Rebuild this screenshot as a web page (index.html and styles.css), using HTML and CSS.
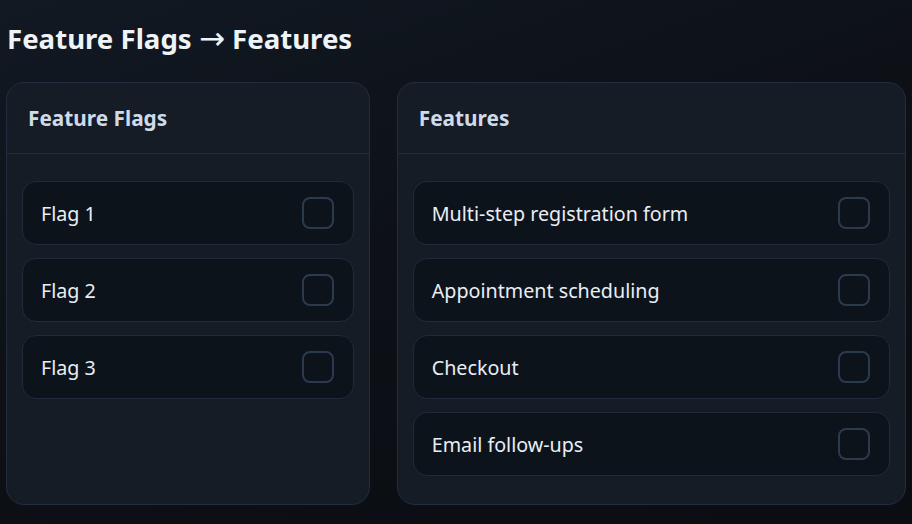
FILE: index.html
```html
<!DOCTYPE html>
<html lang="en">
<head>
<meta charset="UTF-8" />
<meta name="viewport" content="width=device-width, initial-scale=1.0" />
<title>Feature Flags → Features</title>
<link rel="stylesheet" href="styles.css">
</head>
<body>

<h1>Feature Flags <span class="arrow">→</span> Features</h1>

<div class="boards">
  <div class="card">
    <div class="card-head">Feature Flags</div>
    <div class="card-body">
      <label class="item"><span>Flag 1</span><span class="box"></span></label>
      <label class="item"><span>Flag 2</span><span class="box"></span></label>
      <label class="item"><span>Flag 3</span><span class="box"></span></label>
    </div>
  </div>

  <div class="card">
    <div class="card-head">Features</div>
    <div class="card-body">
      <label class="item"><span>Multi-step registration form</span><span class="box"></span></label>
      <label class="item"><span>Appointment scheduling</span><span class="box"></span></label>
      <label class="item"><span>Checkout</span><span class="box"></span></label>
      <label class="item"><span>Email follow-ups</span><span class="box"></span></label>
    </div>
  </div>
</div>

</body>
</html>
```

FILE: styles.css
```css
html, body {
  height: 100%;
}

body {
  margin: 0;
  padding: 0 6px;
  font-family: "Noto Sans", "Open Sans", sans-serif;
  color: #e6edf3;
  background: linear-gradient(160deg, #121923 0%, #0d1117 45%, #0a0d12 100%);
}

h1 {
  margin: 0;
  padding: 18px 1px 0;
  height: 40px;
  font-size: 27.6px;
  font-weight: 700;
  line-height: 40px;
  color: #eef3f8;
}

.arrow {
  font-family: "DejaVu Sans", sans-serif;
  font-weight: 400;
  font-size: 31px;
  line-height: 0;
}

.boards {
  display: grid;
  grid-template-columns: 5fr 7fr;
  gap: 27px;
  margin-top: 24px;
}

.card {
  background: #161c26;
  border: 1px solid #222d3d;
  border-radius: 18px;
  height: 421px;
}

.card-head {
  height: 70px;
  padding: 0 21px;
  display: flex;
  align-items: center;
  font-size: 20.8px;
  font-weight: 700;
  color: #cfdbe9;
  border-bottom: 1px solid #222d3d;
}

.card-body {
  padding: 27px 15px;
  display: flex;
  flex-direction: column;
  gap: 13px;
}

.item {
  height: 62px;
  display: flex;
  align-items: center;
  justify-content: space-between;
  padding: 0 19px 0 18px;
  background: #0d131b;
  border: 1px solid #1f2a3b;
  border-radius: 14px;
  font-size: 19.7px;
  color: #e8eef5;
}

.item span:first-child {
  padding-top: 1px;
}

.box {
  width: 28px;
  height: 28px;
  border: 2px solid #2c3a50;
  border-radius: 8px;
}
```
